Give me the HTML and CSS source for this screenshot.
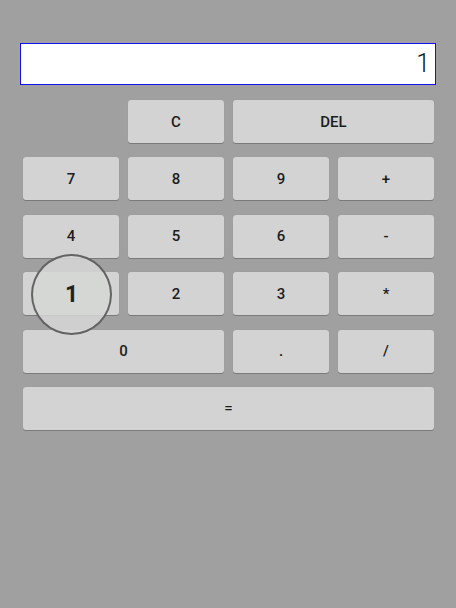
FILE: index.html
```html
<!DOCTYPE html>
<html>
<head>
<meta charset="utf-8">
<link rel="stylesheet" href="styles.css">
</head>
<body>
<div class="app">
  <div class="display">1</div>
  <div class="keys">
    <div class="key k-c">C</div>
    <div class="key k-del">DEL</div>
    <div class="key">7</div>
    <div class="key">8</div>
    <div class="key">9</div>
    <div class="key">+</div>
    <div class="key">4</div>
    <div class="key">5</div>
    <div class="key">6</div>
    <div class="key">-</div>
    <div class="key k-pressed"><span class="touch">1</span></div>
    <div class="key">2</div>
    <div class="key">3</div>
    <div class="key">*</div>
    <div class="key k-zero">0</div>
    <div class="key">.</div>
    <div class="key">/</div>
    <div class="key k-eq">=</div>
  </div>
</div>
</body>
</html>
```

FILE: styles.css
```css
html, body {
  margin: 0;
  padding: 0;
  background: #a0a0a0;
  width: 456px;
  height: 608px;
  overflow: hidden;
  font-family: Roboto, "Noto Sans", sans-serif;
}
.app {
  padding: 43px 20px 0 20px;
}
.display {
  box-sizing: border-box;
  height: 42px;
  background: #ffffff;
  border: 1px solid #1010f0;
  text-align: right;
  font-size: 25px;
  line-height: 40px;
  color: #111111;
  padding-right: 5px;
  font-weight: 300;
}
.keys {
  display: grid;
  grid-template-columns: repeat(4, 96px);
  grid-auto-rows: 43px;
  column-gap: 9px;
  row-gap: 14.4px;
  margin: 15px 2px 0 3px;
}
.key {
  background: #d2d3d2;
  border-radius: 3px;
  box-shadow: 0 1px 0 #7a7a7a, 0 0 1px #8a8a8a;
  display: flex;
  align-items: center;
  justify-content: center;
  font-size: 15px;
  font-weight: 500;
  color: #1c1c1c;
}
.k-c { grid-column: 2; }
.k-del { grid-column: 3 / span 2; }
.k-zero { grid-column: 1 / span 2; }
.k-eq { grid-column: 1 / span 4; }
.k-pressed {
  position: relative;
  z-index: 2;
}
.touch {
  position: absolute;
  left: 8px;
  top: -18px;
  width: 81px;
  height: 81px;
  box-sizing: border-box;
  border-radius: 50%;
  border: 2px solid rgba(80, 80, 80, 0.85);
  background: rgba(214, 215, 214, 0.85);
  display: flex;
  align-items: center;
  justify-content: center;
  font-size: 23px;
  font-weight: 700;
  color: #222222;
}
```
